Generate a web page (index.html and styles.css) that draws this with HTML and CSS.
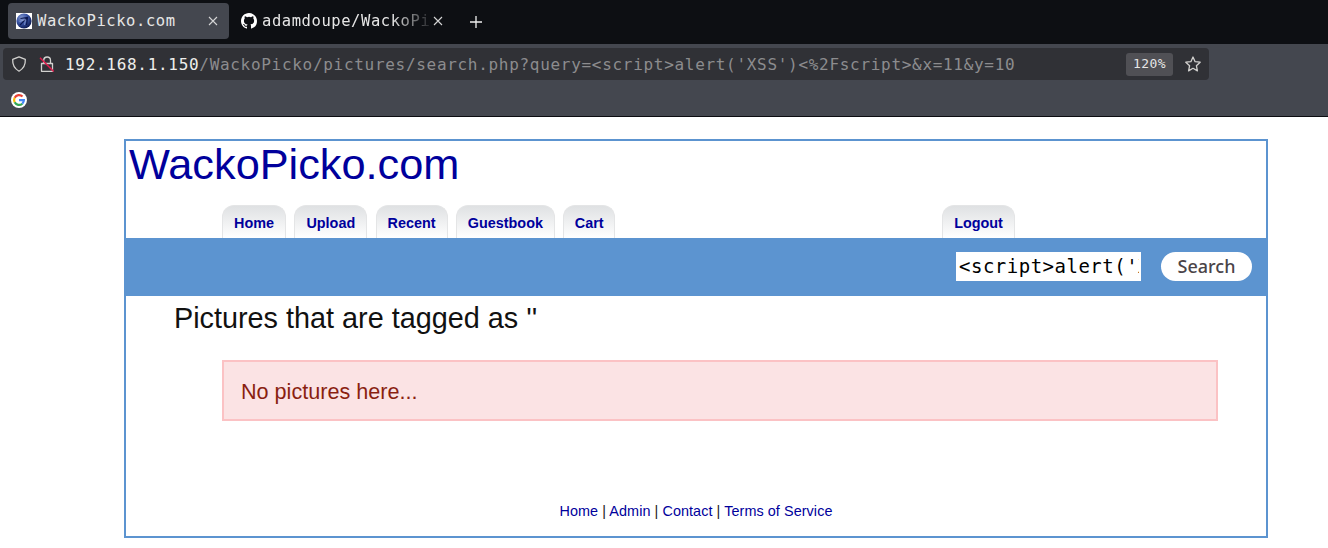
FILE: index.html
```html
<!DOCTYPE html>
<html lang="en">
<head>
<meta charset="utf-8">
<title>WackoPicko.com</title>
<link rel="stylesheet" href="styles.css">
</head>
<body>
<header class="browser">
  <div class="tabstrip">
    <div class="tab tab-active">
      <svg class="favicon" viewBox="0 0 16 16"><defs><radialGradient id="globe" cx=".35" cy=".3" r=".75"><stop offset="0" stop-color="#8398cf"/><stop offset=".5" stop-color="#3853a4"/><stop offset="1" stop-color="#0a174d"/></radialGradient></defs><path fill="#fff" d="M0 0h16v16H0z"/><circle cx="8" cy="8" r="7.600" fill="url(#globe)"/><path d="M4.500 5.500 11.500 4.500 10.500 12M4 12l7.500-7.500" fill="none" stroke="#0b174e" stroke-width="1.200"/><path d="M3.500 8.500 9.500 6.500 8.500 12" fill="none" stroke="#a6b5df" stroke-width=".6"/></svg>
      <span class="tab-title">WackoPicko.com</span>
      <svg class="close" viewBox="0 0 10 10"><path d="m1 1 8 8M9 1 1 9"/></svg>
    </div>
    <div class="tab tab-idle">
      <svg class="favicon" viewBox="0 0 16 16"><path fill="#fff" d="M8 0C3.580 0 0 3.580 0 8c0 3.540 2.290 6.530 5.470 7.590.4.070.55-.17.55-.38 0-.19-.01-.82-.01-1.490-2.010.37-2.530-.49-2.690-.94-.09-.23-.48-.94-.82-1.130-.28-.15-.68-.52-.01-.53.63-.01 1.080.58 1.230.82.72 1.210 1.870.87 2.330.66.070-.52.28-.87.51-1.070-1.780-.2-3.640-.89-3.640-3.950 0-.87.31-1.590.82-2.150-.08-.2-.36-1.020.08-2.120 0 0 .67-.21 2.200.82a7.600 7.600 0 0 1 4 0c1.530-1.040 2.200-.82 2.200-.82.44 1.100.16 1.920.08 2.120.51.56.82 1.270.82 2.150 0 3.070-1.870 3.750-3.650 3.950.29.25.54.73.54 1.480 0 1.070-.01 1.930-.01 2.200 0 .21.15.46.55.38A8.010 8.010 0 0 0 16 8c0-4.420-3.580-8-8-8Z"/></svg>
      <span class="tab-title tab-title-faded">adamdoupe/WackoPi</span>
      <svg class="close" viewBox="0 0 10 10"><path d="m1 1 8 8M9 1 1 9"/></svg>
    </div>
    <svg class="new-tab" viewBox="0 0 12 12"><path d="M6 0v12M0 6h12"/></svg>
  </div>
  <div class="toolbar">
    <div class="urlbar">
      <svg class="icon" viewBox="0 0 16 16"><path d="M8 .8 14.300 3.400C14.600 8.500 12.800 12.500 8 15.200 3.200 12.500 1.400 8.500 1.700 3.400Z"/></svg>
      <svg class="icon icon-lock" viewBox="0 0 16 16"><path d="M2.500 7.500h11v7.800h-11zM4.700 7.500V4.400a3.400 3.400 0 0 1 6.800 0v3.100"/><path class="slash" d="m1 1.800 13.700 13.700"/></svg>
      <div class="url"><span class="host">192.168.1.150</span>/WackoPicko/pictures/search.php?query=&lt;script&gt;alert('XSS')&lt;%2Fscript&gt;&amp;x=11&amp;y=10</div>
      <span class="zoom-level">120%</span>
      <svg class="icon star" viewBox="0 0 16 16"><path d="m8 1 2.100 4.700 5.100.5-3.800 3.500 1 5.200L8 12.300l-4.400 2.600 1-5.200L.8 6.200l5.100-.5Z"/></svg>
    </div>
  </div>
  <div class="bookmarks">
    <svg class="google" viewBox="0 0 16 16"><circle cx="8" cy="8" r="8" fill="#fff"/><g fill="none" stroke-width="2.200"><path stroke="#ea4335" d="M3.660 5.700A4.900 4.900 0 0 1 11.500 4.600"/><path stroke="#fbbc05" d="M3.660 10.300a4.900 4.900 0 0 1 0-4.600"/><path stroke="#34a853" d="M11.300 11.700a4.900 4.900 0 0 1-7.640-1.400"/><path stroke="#4285f4" d="M8 8.100h4.900A4.900 4.900 0 0 1 11.300 11.700"/></g></svg>
  </div>
</header>
<main class="site">
  <h1 class="brand">WackoPicko.com</h1>
  <nav class="menu">
    <a class="menu-tab home">Home</a>
    <a class="menu-tab upload">Upload</a>
    <a class="menu-tab recent">Recent</a>
    <a class="menu-tab guestbook">Guestbook</a>
    <a class="menu-tab cart">Cart</a>
    <a class="menu-tab logout">Logout</a>
  </nav>
  <div class="search-band">
    <input class="search-input" type="text" value="&lt;script&gt;alert('XSS')">
    <div class="search-button">Search</div>
  </div>
  <h2 class="heading">Pictures that are tagged as ''</h2>
  <p class="notice">No pictures here...</p>
  <footer class="footer"><a>Home</a> | <a>Admin</a> | <a>Contact</a> | <a>Terms of Service</a></footer>
</main>
</body>
</html>
```
FILE: styles.css
```css
* { box-sizing: border-box; }
body {
  margin: 0;
  height: 548px;
  overflow: hidden;
  background: #fff;
  font-family: "Liberation Sans", Arial, sans-serif;
}
svg { flex: none; display: block; }

.browser {
  height: 117px;
  background: #44474f;
  border-bottom: 1px solid #0c0d11;
  font-family: "DejaVu Sans Mono", monospace;
  color: #e6e6e6;
}
.tabstrip {
  display: flex;
  align-items: center;
  height: 44px;
  padding: 0 8px 2px;
  background: #0d0f13;
}
.tab { display: flex; align-items: center; height: 36px; }
.tab-active {
  width: 221px;
  padding: 0 11px 0 8px;
  border-radius: 4px;
  background: #44474f;
}
.tab-idle { width: 214px; padding-left: 12px; }
.favicon { width: 16px; height: 16px; }
.tab-title {
  flex: none;
  width: 170px;
  margin-left: 5px;
  overflow: hidden;
  white-space: nowrap;
  font-size: 15.5px;
  line-height: 24px;
  letter-spacing: .57px;
}
.tab-title-faded {
  width: 170px;
  -webkit-mask-image: linear-gradient(90deg, #000 130px, transparent 172px);
  mask-image: linear-gradient(90deg, #000 130px, transparent 172px);
}
.close { width: 10px; height: 10px; margin-left: 1px; fill: none; stroke: #d5d5d6; stroke-width: 1.1; }
.tab-idle .close { margin-left: 1px; }
.new-tab { width: 12px; height: 12px; margin: 2px 0 0 27px; fill: none; stroke: #f0f0f0; stroke-width: 1.3; }

.toolbar { height: 40px; padding: 4px 3px; }
.urlbar {
  display: flex;
  align-items: center;
  width: 1206px;
  height: 32px;
  padding: 0 8px;
  border-radius: 4px;
  background: #303136;
}
.icon { width: 16px; height: 16px; fill: none; stroke: #d2d1cf; stroke-width: 1.3; stroke-linejoin: round; }
.icon-lock { margin-left: 12px; }
.slash { stroke: #e01b4c; stroke-width: 1.5; }
.url {
  flex: 1;
  margin-left: 10px;
  padding-top: 1px;
  white-space: nowrap;
  color: #8c8c8e;
  font-size: 16px;
  line-height: 24px;
  letter-spacing: .697px;
}
.host { color: #eeeeec; }
.zoom-level {
  width: 47px;
  height: 23px;
  margin-right: 12px;
  border-radius: 3px;
  background: #505055;
  text-align: center;
  font-size: 13px;
  line-height: 22px;
  letter-spacing: .4px;
}
.bookmarks { height: 32px; padding: 8px 11px; }
.google { width: 16px; height: 16px; }

.site {
  display: flex;
  flex-direction: column;
  width: 1144px;
  height: 399px;
  margin: 22px 0 0 124px;
  border: 2px solid #5c94d0;
}
.brand {
  height: 64px;
  margin: 0;
  padding-left: 3px;
  color: #00009c;
  font-size: 43.3px;
  font-weight: 400;
  line-height: 46px;
}
.menu { display: flex; gap: 8.3px; height: 33px; padding-left: 96px; }
.menu-tab {
  height: 33px;
  border: 1px solid #e4e5e6;
  border-bottom: 0;
  border-radius: 12px 12px 0 0;
  background: linear-gradient(#dfe1e3, #fff);
  color: #00009c;
  text-align: center;
  font-size: 14.4px;
  font-weight: 700;
  line-height: 34px;
}
.home { width: 64px; }
.upload { width: 73px; }
.recent { width: 72px; }
.guestbook { width: 99px; }
.cart { width: 52px; }
.logout { width: 73px; margin: 0 251px 0 auto; }
.search-band {
  display: flex;
  justify-content: flex-end;
  align-items: flex-start;
  gap: 20px;
  height: 58px;
  padding: 14px 14px 0 0;
  background: #5c94d0;
}
.search-input {
  width: 185px;
  height: 29px;
  border: 0;
  border-radius: 0;
  padding: 0 2px 0 3px;
  background: #fff;
  color: #000;
  font: 19px/29px "DejaVu Sans Mono", monospace;
  letter-spacing: .5px;
}
.search-button {
  width: 91px;
  height: 29px;
  border-radius: 15px;
  background: #fff;
  color: #4a4448;
  text-align: center;
  font: 500 18px/28px "Noto Sans", sans-serif;
}
.heading {
  margin: 0;
  padding-left: 48px;
  color: #111;
  font-size: 28.8px;
  font-weight: 400;
  line-height: 44px;
}
.notice {
  width: 996px;
  height: 61px;
  margin: 20px 0 0 96px;
  padding-left: 17px;
  border: 2px solid #fbc2c4;
  background: #fbe3e4;
  color: #8a1f11;
  font-size: 21.6px;
  line-height: 59px;
}
.footer {
  margin-top: 80px;
  color: #222;
  text-align: center;
  font-size: 14.4px;
  line-height: 20px;
  letter-spacing: .07px;
}
.footer a { color: #00009c; }
```
